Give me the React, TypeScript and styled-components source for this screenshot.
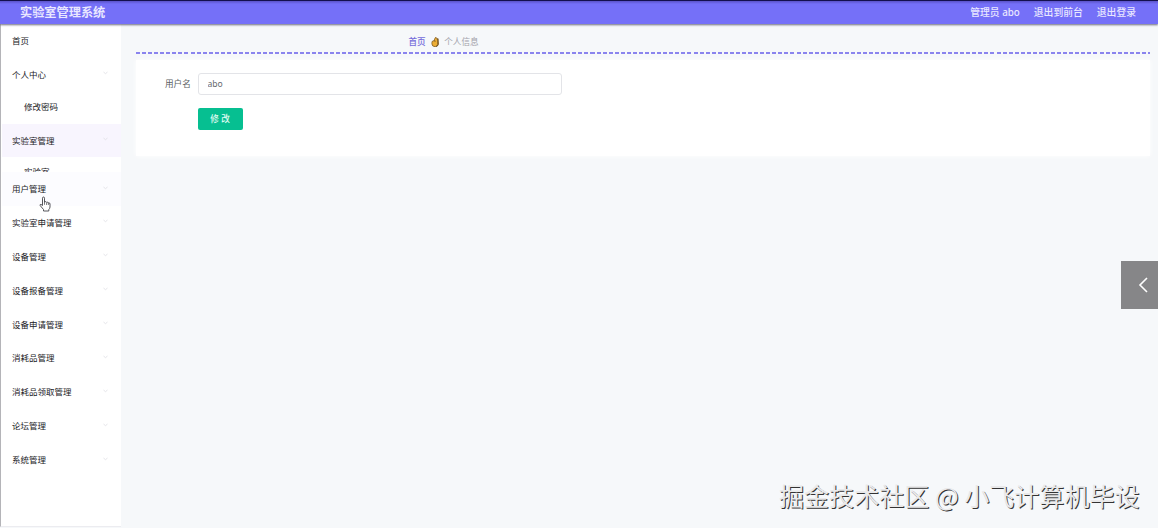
import React from 'react';
import styled, { createGlobalStyle } from 'styled-components';

const GlobalStyle = createGlobalStyle`
  * { box-sizing: border-box; }
  html, body { margin: 0; padding: 0; }
  body {
    height: 528px;
    overflow: hidden;
    background: #f6f8fa;
    font-family: "Liberation Sans", "Noto Sans CJK SC", sans-serif;
  }
`;

const Page = styled.div`
  position: relative;
  display: flex;
  flex-direction: column;
  height: 528px;
  overflow: hidden;
  background: #f6f8fa;
`;

const Header = styled.header`
  position: relative;
  z-index: 1;
  display: flex;
  align-items: center;
  justify-content: space-between;
  flex: none;
  height: 24px;
  padding: 0 22px 0 20px;
  border-top: 1px solid #14104e;
  background: linear-gradient(#5a52c8 0, #7570f8 3px, #7570f8 100%);
  box-shadow: 0 1px 2px rgba(60, 60, 80, 0.75);
  color: #e9e7ff;
`;

const Title = styled.h1`
  margin: 0;
  font-size: 12.2px;
  line-height: 22px;
  font-weight: 700;
`;

const HeaderLinks = styled.nav`
  display: flex;
  gap: 14px;
  font-size: 9.8px;
  line-height: 20px;
  font-weight: 500;
  font-family: "Noto Sans", "Noto Sans CJK SC", sans-serif;
`;

const Body = styled.div`
  display: flex;
  flex: 1;
  min-height: 0;
`;

const Sidebar = styled.aside`
  flex: none;
  width: 121px;
  height: 503px;
  border-left: 1px solid #b4b4b8;
  border-bottom: 1px solid #ececf0;
  background: #fff;
`;

const MenuRow = styled.div<{ $tone?: string }>`
  display: flex;
  align-items: center;
  justify-content: space-between;
  height: 33.9px;
  margin-left: 1px;
  padding: 0 13px 0 10px;
  background: ${(p) => p.$tone ?? 'transparent'};
  color: #222226;
  font-size: 8.5px;
  line-height: 12px;
`;

const SubMenu = styled.div<{ $height: number }>`
  height: ${(p) => p.$height}px;
  padding: 9px 0 0 23px;
  overflow: hidden;
  color: #222226;
  font-size: 8.5px;
  line-height: 12px;
`;

const Arrow = styled.svg`
  width: 5px;
  height: 4px;
  margin-top: -3px;
  fill: none;
  stroke: #dddde2;
  stroke-width: 0.8;
`;

const Main = styled.main`
  flex: 1;
  padding: 8px 8px 0 14px;
`;

const Breadcrumb = styled.div`
  display: flex;
  align-items: center;
  height: 20px;
  padding: 0 0 1px 273.5px;
  font-size: 8.6px;
  line-height: 12px;
`;

const DashedRule = styled.div`
  height: 2px;
  margin-left: 1px;
  background: repeating-linear-gradient(90deg, #8a84ee 0 4px, transparent 4px 6.06px);
`;

const Crumb = styled.span<{ $active?: boolean }>`
  color: ${(p) => (p.$active ? '#756cda' : '#a2a2aa')};
  font-weight: ${(p) => (p.$active ? 500 : 400)};
`;

const HandIcon = styled.svg`
  width: 8px;
  height: 10px;
  margin: 0 5.5px 0 5px;
`;

const Card = styled.section`
  height: 96px;
  margin: 6px 0 0 1px;
  padding: 13px 0 0 29px;
  background: #fff;
  box-shadow: 0 0 5px #fff;
`;

const Field = styled.div`
  display: flex;
  align-items: center;
`;

const Label = styled.label`
  width: 32.5px;
  color: #5d5f64;
  font-size: 8.6px;
  line-height: 12px;
`;

const Input = styled.input`
  width: 364px;
  height: 22px;
  padding: 0 9px;
  border: 1px solid #e3e4e8;
  border-radius: 3px;
  outline: none;
  background: #fff;
  color: #66686e;
  font: 8.6px "Noto Sans", sans-serif;
`;

const Submit = styled.button`
  display: block;
  width: 45px;
  height: 22px;
  margin: 13px 0 0 32.5px;
  padding: 0;
  border: 0;
  border-radius: 2px;
  background: #06bf91;
  color: #e0fdf4;
  font: 500 8.6px/22px "Liberation Sans", "Noto Sans CJK SC", sans-serif;
`;

const Drawer = styled.button`
  position: absolute;
  top: 261px;
  right: 0;
  display: flex;
  align-items: center;
  width: 37px;
  height: 48px;
  padding: 0 0 0 17px;
  border: 0;
  background: #868688;
`;

const Watermark = styled.div`
  position: absolute;
  top: 477px;
  left: 779px;
  color: #e9e9ea;
  font: 25.05px/36px "Noto Sans CJK SC", sans-serif;
  white-space: nowrap;
  text-shadow: 1px 1px 0 #333;
`;

const Pointer = styled.svg`
  position: absolute;
  left: 39px;
  top: 196px;
  width: 12px;
  height: 16px;
`;

const lowerMenu = [
  '实验室申请管理',
  '设备管理',
  '设备报备管理',
  '设备申请管理',
  '消耗品管理',
  '消耗品领取管理',
  '论坛管理',
  '系统管理',
];

function MenuItem({ label, tone, leaf }: { label: string; tone?: string; leaf?: boolean }) {
  return (
    <MenuRow $tone={tone}>
      <span>{label}</span>
      {!leaf && (
        <Arrow viewBox="0 0 5 4">
          <path d="M.5 1 2.5 2.7 4.5 1" />
        </Arrow>
      )}
    </MenuRow>
  );
}

export default function App() {
  return (
    <Page>
      <GlobalStyle />
      <Header>
        <Title>实验室管理系统</Title>
        <HeaderLinks>
          <span>管理员 abo</span>
          <span>退出到前台</span>
          <span>退出登录</span>
        </HeaderLinks>
      </Header>
      <Body>
        <Sidebar>
          <MenuItem label="首页" leaf />
          <MenuItem label="个人中心" />
          <SubMenu $height={31.8}>修改密码</SubMenu>
          <MenuItem label="实验室管理" tone="#f8f5fe" />
          <SubMenu $height={14.6}>实验室</SubMenu>
          <MenuItem label="用户管理" tone="#fcfcff" />
          {lowerMenu.map((label) => (
            <MenuItem key={label} label={label} />
          ))}
        </Sidebar>
        <Main>
          <Breadcrumb>
            <Crumb $active>首页</Crumb>
            <HandIcon viewBox="0 0 8 10">
              <path
                d="M1 4.5 3 3.6 4.2.8Q5.2-.2 5.6 1.1L5.9 2.2 7 1.4 7.5 7Q7 9.7 4.2 9.7 1 9.6.9 7Z"
                fill="#edae35"
                stroke="#73501c"
                strokeWidth=".7"
              />
              <path d="M6.8 2V7.6Q6.5 9 5 9.4M3 3.8 4.6 4.2" fill="none" stroke="#5a4322" strokeWidth=".8" />
            </HandIcon>
            <Crumb>个人信息</Crumb>
          </Breadcrumb>
          <DashedRule />
          <Card>
            <Field>
              <Label htmlFor="username">用户名</Label>
              <Input id="username" defaultValue="abo" />
            </Field>
            <Submit>修 改</Submit>
          </Card>
        </Main>
      </Body>
      <Drawer aria-label="展开">
        <svg width="11" height="18" viewBox="0 0 11 18" fill="none" stroke="#fff" strokeWidth="1.6">
          <path d="M9 2 2 9 9 16" />
        </svg>
      </Drawer>
      <Watermark>掘金技术社区 @ 小飞计算机毕设</Watermark>
      <Pointer viewBox="0 0 12 16">
        <path
          d="M3.5 9.5V2.2Q3.5 1 4.5 1T5.5 2.2V6Q7.2 5 7.6 6.3 9 5.6 9.4 6.9 11 6.5 11 8V11Q10.9 12.5 9.8 13.5V15H4.5V13.5L1.2 9.6Q.7 8.3 2 8.4Z"
          fill="#fff"
          stroke="#44444a"
          strokeWidth=".9"
          strokeLinejoin="round"
        />
        <path d="M5.5 6V8.8M7.6 6.5V9M9.4 7V9" fill="none" stroke="#44444a" strokeWidth=".7" />
      </Pointer>
    </Page>
  );
}
